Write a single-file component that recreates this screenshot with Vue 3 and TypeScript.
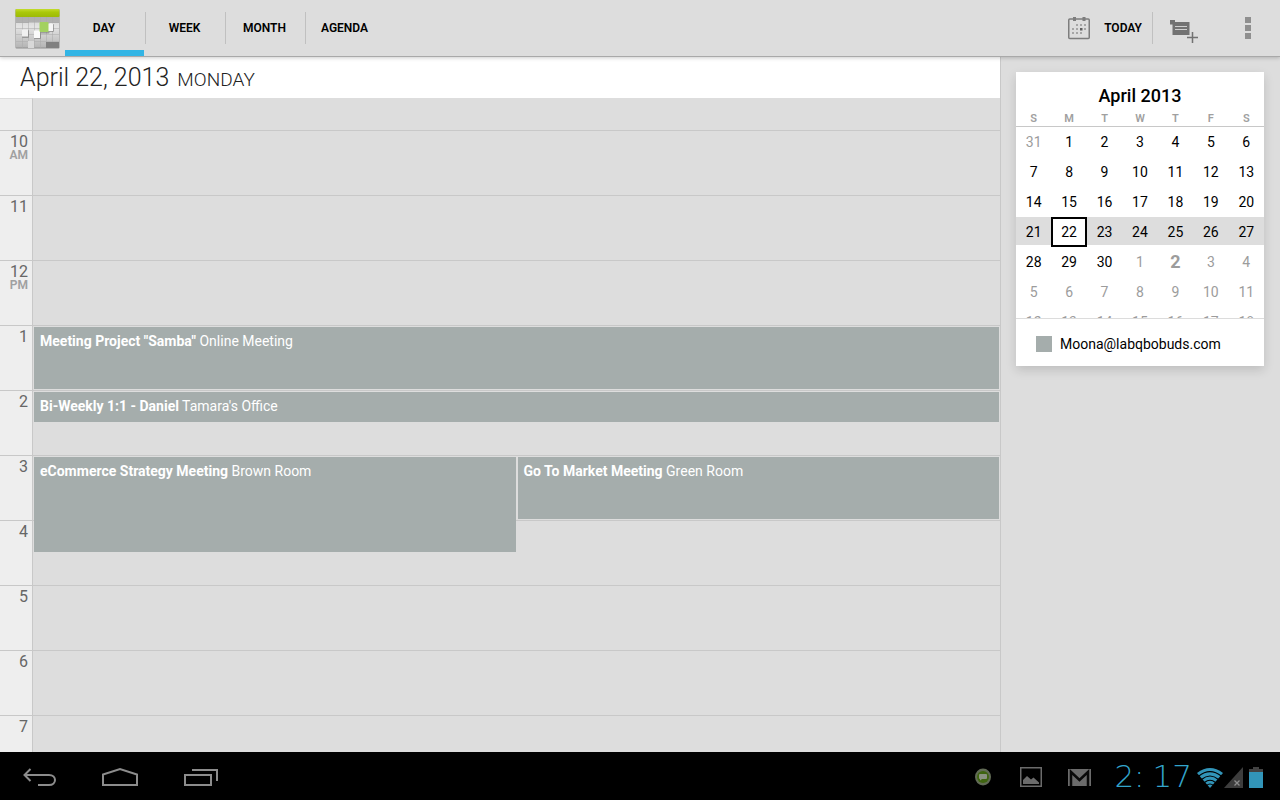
<script setup lang="ts">
import { ref } from 'vue'

interface Hour { label: string; period?: string }
interface CalendarEvent { title: string; place: string; start: number; length: number; column: string }
interface Day { n: number; muted?: boolean; today?: boolean }

const tabs = ['DAY', 'WEEK', 'MONTH', 'AGENDA']
const activeTab = ref('DAY')

const hours: Hour[] = [
  { label: '10', period: 'AM' },
  { label: '11' },
  { label: '12', period: 'PM' },
  { label: '1' },
  { label: '2' },
  { label: '3' },
  { label: '4' },
  { label: '5' },
  { label: '6' },
  { label: '7' },
]

// start and length count half-hour slots from 10 AM
const events: CalendarEvent[] = [
  { title: 'Meeting Project "Samba"', place: 'Online Meeting', start: 6, length: 2, column: '2 / 4' },
  { title: 'Bi-Weekly 1:1 - Daniel', place: "Tamara's Office", start: 8, length: 1, column: '2 / 4' },
  { title: 'eCommerce Strategy Meeting', place: 'Brown Room', start: 10, length: 3, column: '2 / 3' },
  { title: 'Go To Market Meeting', place: 'Green Room', start: 10, length: 2, column: '3 / 4' },
]

const weekdays = ['S', 'M', 'T', 'W', 'T', 'F', 'S']
const weeks: Day[][] = Array.from({ length: 7 }, (_, w) =>
  Array.from({ length: 7 }, (_, d) => {
    const i = w * 7 + d
    if (i === 0) return { n: 31, muted: true }
    if (i <= 30) return { n: i }
    return { n: i - 30, muted: true, today: i === 32 }
  }),
)
const selectedWeek = 3
const selectedDay = ref(22)
</script>

<template>
  <div class="screen">
    <header class="bar">
      <svg class="logo" width="46" height="40" viewBox="0 0 46 40" aria-hidden="true">
        <defs>
          <linearGradient id="lime" x1="0" y1="0" x2="0" y2="1">
            <stop offset="0" stop-color="#c3dc2c" />
            <stop offset="0.4" stop-color="#aac80a" />
            <stop offset="1" stop-color="#9dba06" />
          </linearGradient>
          <linearGradient id="sheet" x1="0" y1="0" x2="0" y2="1">
            <stop offset="0" stop-color="#d0d0d0" />
            <stop offset="0.35" stop-color="#e4e4e4" />
            <stop offset="1" stop-color="#b4b4b4" />
          </linearGradient>
        </defs>
        <rect x="0.5" y="0" width="44" height="39.500" rx="1" fill="#8f8f8f" />
        <rect x="1" y="7" width="43" height="31.500" fill="url(#sheet)" />
        <path d="M1 8h43v6H26v-1H14v1H1z" fill="#a6a6a6" opacity="0.8" />
        <path d="M7.500 8v31M13.500 8v31M19.500 8v31M25.500 8v31M31.500 8v31M37.500 8v31M1 13.500h43M1 19.500h43M1 25.500h43M1 32.500h43" stroke="#a9a9a9" stroke-width="1" opacity="0.5" fill="none" />
        <rect x="31" y="33" width="13" height="6" fill="#808080" />
        <rect x="0.500" y="0" width="44" height="8" rx="1" fill="url(#lime)" />
        <g fill="#777" opacity="0.6">
          <rect x="7" y="21" width="7" height="8" rx="1" />
          <rect x="19" y="22" width="7" height="8" rx="1" />
          <rect x="32" y="15" width="7" height="8" rx="1" />
          <rect x="25" y="14" width="9.500" height="10.500" rx="1" />
        </g>
        <rect x="7" y="20.500" width="6" height="7" fill="#f0f0f0" />
        <rect x="19" y="21.500" width="6" height="7.500" fill="#fafafa" />
        <rect x="32" y="14.500" width="6" height="7.500" fill="#f6f6f6" />
        <rect x="13" y="32" width="6" height="7" fill="#d8d8d8" />
        <rect x="24.500" y="13" width="9" height="10" rx="1" fill="#a3d160" />
      </svg>
      <nav class="tabs" aria-label="Views">
        <button
          v-for="tab in tabs"
          :key="tab"
          type="button"
          class="tab"
          :class="{ active: tab === activeTab }"
          @click="activeTab = tab"
        >{{ tab }}</button>
      </nav>
      <div class="actions">
        <button type="button" class="today">
          <svg width="24" height="24" viewBox="0 0 24 24" aria-hidden="true">
            <rect x="1.750" y="3" width="20.500" height="19.500" rx="1" fill="none" stroke="#7d7d7d" stroke-width="1.500" />
            <path d="M6 1h3v4H6zM15.500 1h3v4h-3z" fill="#7d7d7d" />
            <path d="M9 8h2v2H9zM13 8h2v2h-2zM17 8h2v2h-2zM5 12h2v2H5zM9 12h2v2H9zM17 12h2v2h-2zM5 16h2v2H5zM9 16h2v2H9zM13 16h2v2h-2z" fill="#a6a6a6" />
            <path d="M13 12h2.500v2.500H13z" fill="#5f5f5f" />
          </svg>
          <span>TODAY</span>
        </button>
        <button type="button" class="icon-button" aria-label="New event">
          <svg width="28" height="24" viewBox="0 0 28 24" aria-hidden="true">
            <path d="M0 0h5v2h14.500v13H2.500V4.500H0z" fill="#727272" />
            <path d="M5 6.500h12M5 9.500h12" stroke="#cfcfcf" stroke-width="1" fill="none" />
            <path d="M22.500 12v11M17 17.500h11" stroke="#dddddd" stroke-width="4" fill="none" />
            <path d="M22.500 12v11M17 17.500h11" stroke="#727272" stroke-width="1.500" fill="none" />
          </svg>
        </button>
        <button type="button" class="icon-button more" aria-label="More options">
          <svg width="6" height="22" viewBox="0 0 6 22" aria-hidden="true">
            <path d="M0 0h6v6H0zM0 8h6v6H0zM0 16h6v6H0z" fill="#8f8f8f" />
          </svg>
        </button>
      </div>
    </header>

    <main class="content">
      <section class="day">
        <h1 class="date">April 22, 2013 <small>MONDAY</small></h1>
        <div class="grid">
          <div class="hour first" />
          <div class="slot first" />
          <template v-for="(hour, i) in hours" :key="hour.label">
            <div class="hour" :style="{ gridRow: `${i * 2 + 2} / span 2` }">
              {{ hour.label }}<span v-if="hour.period">{{ hour.period }}</span>
            </div>
            <div class="slot" :style="{ gridRow: `${i * 2 + 2} / span 2` }" />
          </template>
          <button
            v-for="event in events"
            :key="event.title"
            type="button"
            class="event"
            :style="{ gridRow: `${event.start + 2} / span ${event.length}`, gridColumn: event.column }"
          ><span><b>{{ event.title }}</b> {{ event.place }}</span></button>
        </div>
      </section>

      <aside class="side">
        <div class="card">
          <h2>April 2013</h2>
          <div class="weeks">
            <table>
              <thead>
                <tr><th v-for="(name, i) in weekdays" :key="i" scope="col">{{ name }}</th></tr>
              </thead>
              <tbody>
                <tr v-for="(week, w) in weeks" :key="w" :class="{ current: w === selectedWeek }">
                  <td v-for="day in week" :key="day.n">
                    <button
                      type="button"
                      :class="{ muted: day.muted, now: day.today, selected: !day.muted && day.n === selectedDay }"
                      @click="selectedDay = day.n"
                    >{{ day.n }}</button>
                  </td>
                </tr>
              </tbody>
            </table>
          </div>
          <div class="account"><i />Moona@labqbobuds.com</div>
        </div>
      </aside>
    </main>

    <footer class="system">
      <button type="button" aria-label="Back">
        <svg width="36" height="20" viewBox="0 0 36 20" fill="none" stroke="#8c8c8c" stroke-width="2" aria-hidden="true">
          <path d="M8.500 2L2.500 8l6 6M3 8h24c8 0 8 10 0 10H16" />
        </svg>
      </button>
      <button type="button" aria-label="Home">
        <svg width="38" height="20" viewBox="0 0 38 20" fill="none" stroke="#8c8c8c" stroke-width="2" aria-hidden="true">
          <path d="M2 18V7.500L19 2l17 5.500V18z" />
        </svg>
      </button>
      <button type="button" aria-label="Recent apps">
        <svg width="36" height="20" viewBox="0 0 36 20" fill="none" stroke="#8c8c8c" stroke-width="2" aria-hidden="true">
          <path d="M3 8h26v10H3zM10 3h25v11" />
        </svg>
      </button>
      <div class="status">
        <svg class="chat" width="16" height="18" viewBox="0 0 16 18" aria-hidden="true">
          <ellipse cx="8" cy="9" rx="8" ry="8.500" fill="#616b55" />
          <circle cx="8" cy="9" r="6" fill="#3f6410" />
          <path d="M5 6h6q1 0 1 1v3q0 1-1 1H7l-2 1.500V11q-1 0-1-1V7q0-1 1-1z" fill="#8b9282" />
        </svg>
        <svg width="22" height="20" viewBox="0 0 22 20" aria-hidden="true">
          <rect x="0.750" y="0.750" width="20.500" height="18.500" fill="none" stroke="#6b6b6b" stroke-width="1.500" />
          <path d="M3 17v-4l4-4 4 3.500 2.500-2 5.500 5V17z" fill="#6b6b6b" />
        </svg>
        <svg width="23" height="17" viewBox="0 0 23 17" aria-hidden="true">
          <rect width="23" height="17" fill="#6b6b6b" />
          <path d="M3 17V3l8.500 8L20 3v14" fill="none" stroke="#0a0a0a" stroke-width="2.500" />
        </svg>
        <time class="clock"><span>2:</span><span>17</span></time>
        <div class="signals">
          <svg width="26" height="20" viewBox="0 0 26 20" aria-hidden="true">
            <path d="M0 5Q13-5 26 5L13 20z" fill="#3295b9" />
            <path d="M1.500 8.200Q13-1 24.500 8.200M4.500 11.500Q13 4.500 21.500 11.500M7.500 14.500Q13 10 18.500 14.500M9.500 17.500Q13 14.500 16.500 17.500" fill="none" stroke="#000" stroke-width="1.200" />
          </svg>
          <svg width="19" height="21" viewBox="0 0 19 21" aria-hidden="true">
            <path d="M0 21L19 0v21z" fill="#3d3d3d" />
            <path d="M10.500 13.500l5 5M15.500 13.500l-5 5" stroke="#8e8e8e" stroke-width="1.300" />
          </svg>
          <svg class="battery" width="14" height="21" viewBox="0 0 14 21" aria-hidden="true">
            <path d="M4 0h6v2h4v3H0V2h4z" fill="#424242" />
            <rect y="5" width="14" height="16" fill="#3295b9" />
          </svg>
        </div>
      </div>
    </footer>
  </div>
</template>

<style>
body {
  margin: 0;
}
</style>

<style scoped>
.screen {
  display: flex;
  flex-direction: column;
  height: 100vh;
  background: #dddddd;
  color: #000;
  font-family: Roboto, "Liberation Sans", sans-serif;
  overflow: hidden;
}

button {
  margin: 0;
  padding: 0;
  border: 0;
  background: none;
  color: inherit;
  font: inherit;
  cursor: pointer;
}

svg {
  display: block;
  flex: none;
}

.bar {
  position: relative;
  z-index: 1;
  display: flex;
  flex: none;
  align-items: center;
  height: 56px;
  padding-left: 15px;
  border-bottom: 1px solid #a9a9a9;
  background: #dddddd;
  box-shadow: 0 1px 4px rgba(0, 0, 0, 0.2);
}

.logo {
  margin: 2px 4px 0 0;
}

.tabs {
  display: flex;
  align-self: stretch;
}

.tab {
  width: 80px;
  padding-right: 3px;
  border-top: 6px solid transparent;
  border-bottom: 6px solid transparent;
  background: linear-gradient(#c0c0c0, #c0c0c0) right center / 1px 32px no-repeat;
  font-size: 12px;
  font-weight: 600;
}

.tab:first-child {
  width: 81px;
}

.tab:last-child {
  background: none;
}

.tab.active {
  border-image: linear-gradient(to right, #33b5e5 79px, transparent 79px) 0 0 6 0;
}

.actions {
  display: flex;
  align-items: center;
  align-self: stretch;
  margin-left: auto;
}

.today {
  display: flex;
  align-items: center;
  gap: 13px;
  height: 32px;
  padding-right: 10px;
  border-right: 1px solid #c0c0c0;
  font-size: 12px;
  font-weight: 600;
}

.icon-button {
  display: grid;
  place-items: center;
  width: 62px;
  height: 56px;
  padding-top: 8px;
}

.more {
  width: 65px;
  padding: 0 0 0 1px;
}

.content {
  display: flex;
  flex: 1;
  min-height: 0;
}

.day {
  display: flex;
  flex: 1;
  flex-direction: column;
  min-width: 0;
}

.date {
  display: flex;
  flex: none;
  align-items: baseline;
  gap: 8px;
  box-sizing: border-box;
  height: 41px;
  margin: 0;
  padding: 1px 20px 0;
  background: #fff;
  color: #222;
  font-size: 25px;
  font-weight: 300;
  line-height: 40px;
}

.date small {
  font-size: 19px;
}

.grid {
  display: grid;
  flex: 1;
  grid-template-rows: 32px repeat(10, 33px 32px);
  grid-template-columns: 33px 1fr 1fr;
  min-height: 0;
  overflow: hidden;
}

.hour {
  grid-column: 1;
  padding: 3px 4px 0 0;
  border-top: 1px solid #c8c8c8;
  border-right: 1px solid #c8c8c8;
  background: #eeeeee;
  color: #666;
  font-size: 16px;
  line-height: 16px;
  text-align: right;
}

.hour span {
  display: block;
  color: #a0a0a0;
  font-size: 12px;
  font-weight: 600;
  line-height: 10px;
}

.slot {
  grid-column: 2 / 4;
  border-top: 1px solid #c8c8c8;
}

.hour.first,
.slot.first {
  grid-row: 1;
  padding: 0;
  border-top-color: #dddddd;
}

.event {
  z-index: 1;
  display: flex;
  align-items: flex-start;
  margin: 2px 1px 1px;
  padding: 6px;
  background: #a5adac;
  color: #fff;
  font-size: 14px;
  line-height: 16px;
  text-align: left;
}

.side {
  flex: none;
  width: 248px;
  padding: 15px 16px 15px 15px;
  border-left: 1px solid #c8c8c8;
}

.card {
  background: #fff;
  box-shadow: 0 4px 10px rgba(0, 0, 0, 0.14);
}

.card h2 {
  margin: 0;
  padding-top: 13px;
  font-size: 18px;
  font-weight: 500;
  line-height: 22px;
  text-align: center;
}

.weeks {
  height: 211px;
  border-bottom: 1px solid #dcdcdc;
  overflow: hidden;
}

table {
  width: 100%;
  border-collapse: collapse;
  table-layout: fixed;
}

th {
  height: 15px;
  padding: 4px 0 0;
  border-bottom: 1px solid #c8c8c8;
  color: #a0a0a0;
  font-size: 11px;
  font-weight: 600;
  line-height: 15px;
}

td {
  height: 30px;
  padding: 0;
}

td button {
  display: block;
  box-sizing: border-box;
  width: 100%;
  height: 30px;
  font-size: 14px;
  line-height: 30px;
}

.current {
  background: linear-gradient(#dddddd, #dddddd) top / 100% 28px no-repeat;
}

td .muted {
  color: #9c9c9c;
}

td .now {
  font-size: 18px;
  font-weight: 700;
}

td .selected {
  border: 2px solid #000;
  background: #fff;
  line-height: 26px;
}

.account {
  display: flex;
  align-items: center;
  gap: 8px;
  height: 47px;
  padding: 2px 20px 0;
  box-sizing: border-box;
  font-size: 14px;
}

.account i {
  width: 16px;
  height: 16px;
  background: #a5adac;
}

.system {
  display: flex;
  flex: none;
  align-items: center;
  height: 48px;
  background: #000;
}

.system button {
  display: grid;
  place-items: center;
  width: 80px;
  height: 48px;
  padding-top: 2px;
}

.status {
  display: flex;
  align-items: center;
  gap: 26px;
  height: 48px;
  margin-left: auto;
  padding-right: 17px;
}

.status > svg,
.signals {
  margin-top: 2px;
}

.status .chat {
  margin-right: 3px;
}

.clock {
  display: flex;
  gap: 8px;
  margin-left: -3px;
  color: #33a5cc;
  font-family: "DejaVu Sans Light", "DejaVu Sans", sans-serif;
  font-size: 31px;
  font-weight: 200;
  line-height: 48px;
}

.signals {
  display: flex;
  align-items: flex-end;
  gap: 1px;
  margin-left: -21px;
}

.battery {
  margin-left: 5px;
}
</style>
